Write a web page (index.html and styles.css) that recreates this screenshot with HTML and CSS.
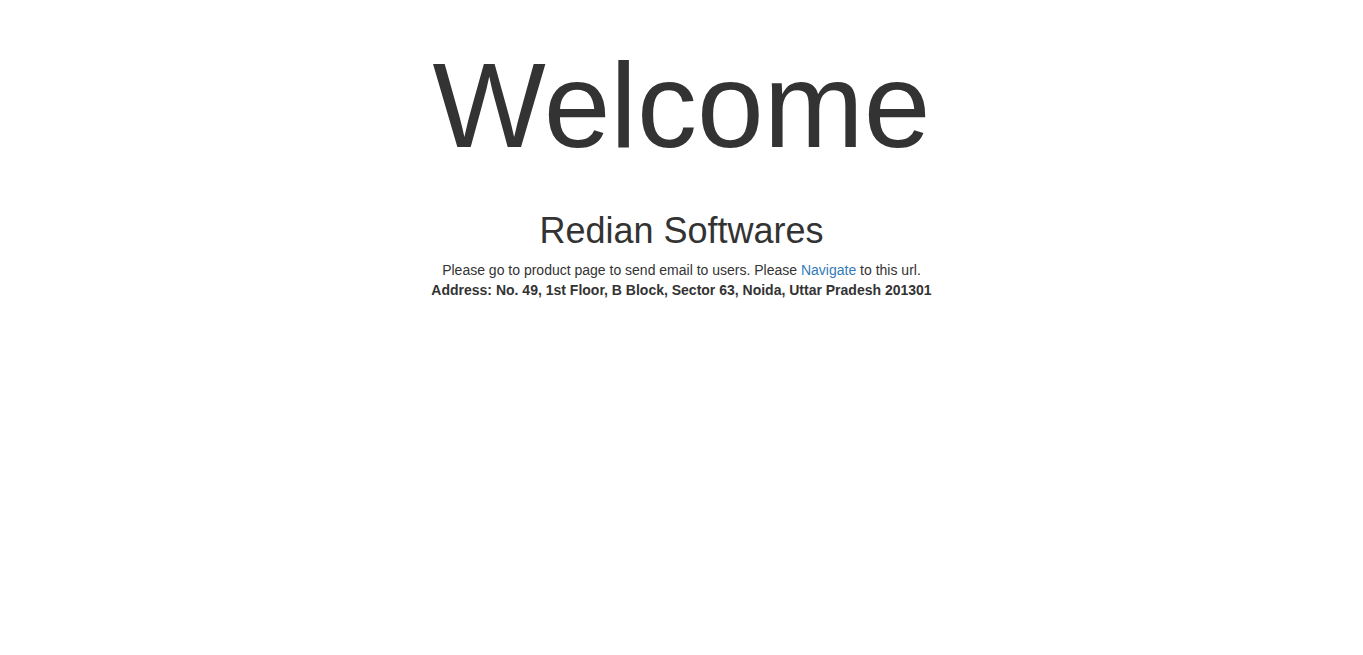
FILE: index.html
```html
<!DOCTYPE html>
<html lang="en">
<head>
<meta charset="utf-8">
<title>Welcome</title>
<link rel="stylesheet" href="styles.css">
</head>
<body>
<main class="page">
  <h1 class="welcome">Welcome</h1>
  <h1 class="company">Redian Softwares</h1>
  <p class="info">Please go to product page to send email to users. Please <a class="link" href="#">Navigate</a> to this url.</p>
  <p class="address"><strong>Address: No. 49, 1st Floor, B Block, Sector 63, Noida, Uttar Pradesh 201301</strong></p>
</main>
</body>
</html>
```

FILE: styles.css
```css
html, body {
  margin: 0;
  padding: 0;
  background: #fff;
}
body {
  font-family: "Liberation Sans", Helvetica, Arial, sans-serif;
  font-size: 14px;
  line-height: 20px;
  color: #333;
}
.page {
  text-align: center;
  padding-top: 39px;
}
.welcome {
  margin: 0;
  font-size: 120px;
  line-height: 132px;
  font-weight: 500;
}
.company {
  margin: 40px 0 9px;
  font-size: 36px;
  line-height: 39.6px;
  font-weight: 500;
}
.info, .address {
  margin: 0;
}
.address strong {
  font-weight: 700;
}
.link {
  color: #337ab7;
  text-decoration: none;
}
```
